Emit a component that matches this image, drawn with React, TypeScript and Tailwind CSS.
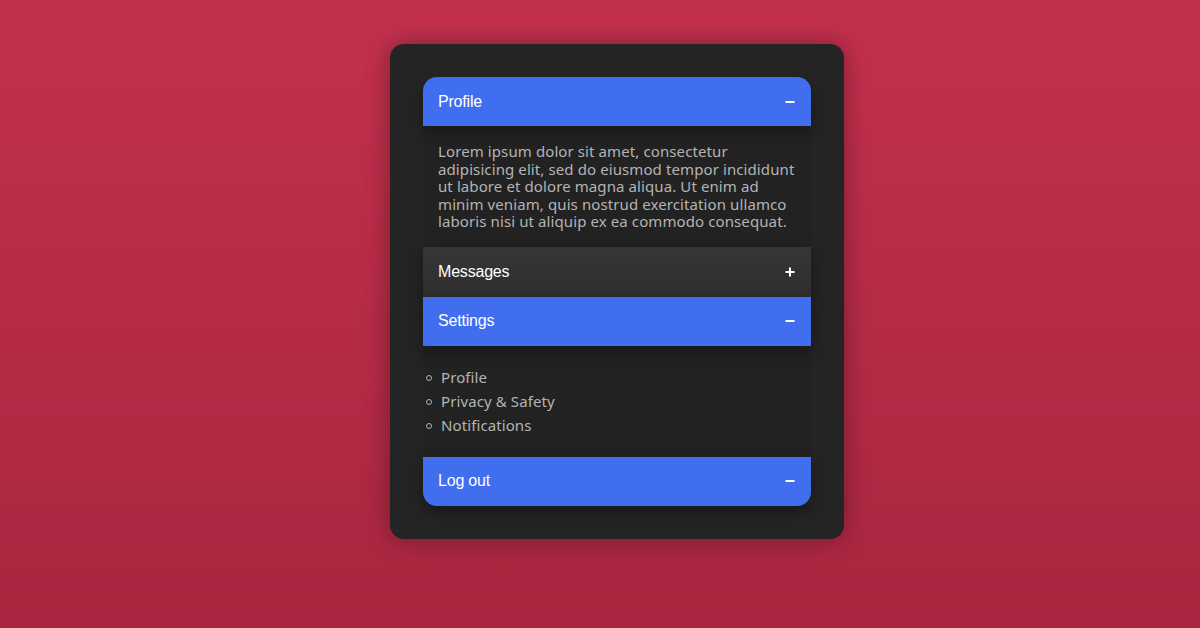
const items = ["Profile", "Privacy & Safety", "Notifications"];

function Minus() {
  return (
    <svg width="10" height="10" viewBox="0 0 10 10" className="shrink-0">
      <rect x="0.5" y="4" width="9" height="2" fill="#fff" />
    </svg>
  );
}

function Plus() {
  return (
    <svg width="10" height="10" viewBox="0 0 10 10" className="shrink-0">
      <rect x="0.5" y="4" width="9" height="2" fill="#fff" />
      <rect x="4" y="0.5" width="2" height="9" fill="#fff" />
    </svg>
  );
}

function Header({
  title,
  open,
  className = "",
}: {
  title: string;
  open: boolean;
  className?: string;
}) {
  return (
    <div
      className={`relative flex items-center justify-between pl-[15px] pr-[16px] text-white shadow-[0_6px_14px_rgba(0,0,0,0.35)] ${
        open
          ? "h-[49px] bg-[#416eee]"
          : "h-[50px] bg-gradient-to-b from-[#363636] to-[#2e2e2e]"
      } ${className}`}
      style={{ fontFamily: '"Liberation Sans", Arial, sans-serif' }}
    >
      <span className="text-[16px] tracking-[-0.2px]">{title}</span>
      {open ? <Minus /> : <Plus />}
    </div>
  );
}

export default function App() {
  return (
    <div className="flex min-h-[628px] w-full items-start justify-center bg-gradient-to-b from-[#c3304d] to-[#a8263f] pl-[34px] pt-[44px]">
      <div className="w-[454px] rounded-[14px] bg-[#242424] p-[33px] shadow-[0_0_24px_rgba(0,0,0,0.35)]">
        <Header title="Profile" open className="rounded-t-[14px]" />
        <div
          className="bg-[#222] px-[15px] pb-[16px] pt-[17px] text-[15px] leading-[17.5px] text-[#b4b4b4]"
          style={{ fontFamily: '"Noto Sans", "Open Sans", sans-serif' }}
        >
          <p className="tracking-[0.1px]">
            Lorem ipsum dolor sit amet, consectetur adipisicing elit, sed do
            eiusmod tempor incididunt ut labore et dolore magna aliqua. Ut enim
            ad minim veniam, quis nostrud exercitation ullamco laboris nisi ut
            aliquip ex ea commodo consequat.
          </p>
        </div>
        <Header title="Messages" open={false} />
        <Header title="Settings" open />
        <div
          className="bg-[#222] pb-[21px] pt-[22px] text-[15px] text-[#b4b4b4]"
          style={{ fontFamily: '"Noto Sans", "Open Sans", sans-serif' }}
        >
          <ul className="flex flex-col gap-[4px]">
            {items.map((item) => (
              <li key={item} className="flex h-[20px] items-center gap-[9px] pl-[3px]">
                <span className="h-[6px] w-[6px] rounded-full border border-[#b4b4b4]" />
                <span className="tracking-[0.1px]">{item}</span>
              </li>
            ))}
          </ul>
        </div>
        <Header title="Log out" open className="rounded-b-[14px]" />
      </div>
    </div>
  );
}
